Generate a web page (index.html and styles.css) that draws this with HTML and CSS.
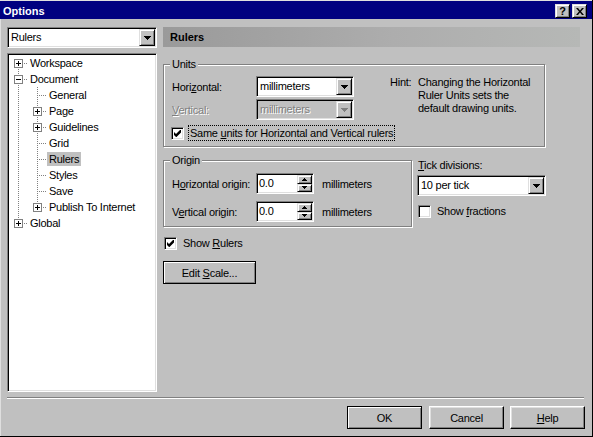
FILE: index.html
```html
<!DOCTYPE html>
<html>
<head>
<meta charset="utf-8">
<title>Options</title>
<link rel="stylesheet" href="styles.css">
</head>
<body>
<div class="window">
  <div class="titlebar">
    <span class="title">Options</span>
    <div class="tbtns">
      <span class="tbtn">?</span>
      <span class="tbtn"><svg width="8" height="7" viewBox="0 0 8 7"><path d="M0 0h2l2 2.5L6 0h2L5 3.5 8 7H6L4 4.5 2 7H0l3-3.5z"/></svg></span>
    </div>
  </div>

  <div class="main">
    <div class="left">
      <div class="combo">
        <span class="combo-text">Rulers</span>
        <span class="combo-btn"><svg width="7" height="4" viewBox="0 0 7 4"><path d="M0 0H7V1H6V2H5V3H4V4H3V3H2V2H1V1H0Z"/></svg></span>
      </div>
      <div class="tree">
        <div class="node"><span class="g first"><svg width="9" height="9"><rect x=".5" y=".5" width="8" height="8" fill="#fff" stroke="#808080"/><path d="M2 4.5h5M4.5 2v5" stroke="#000"/></svg></span><span class="lbl">Workspace</span></div>
        <div class="node"><span class="g tee"><svg width="9" height="9"><rect x=".5" y=".5" width="8" height="8" fill="#fff" stroke="#808080"/><path d="M2 4.5h5" stroke="#000"/></svg></span><span class="lbl">Document</span></div>
        <div class="node"><span class="g pass"></span><span class="g tee"></span><span class="lbl">General</span></div>
        <div class="node"><span class="g pass"></span><span class="g tee"><svg width="9" height="9"><rect x=".5" y=".5" width="8" height="8" fill="#fff" stroke="#808080"/><path d="M2 4.5h5M4.5 2v5" stroke="#000"/></svg></span><span class="lbl">Page</span></div>
        <div class="node"><span class="g pass"></span><span class="g tee"><svg width="9" height="9"><rect x=".5" y=".5" width="8" height="8" fill="#fff" stroke="#808080"/><path d="M2 4.5h5M4.5 2v5" stroke="#000"/></svg></span><span class="lbl">Guidelines</span></div>
        <div class="node"><span class="g pass"></span><span class="g tee"></span><span class="lbl">Grid</span></div>
        <div class="node"><span class="g pass"></span><span class="g tee"></span><span class="lbl sel">Rulers</span></div>
        <div class="node"><span class="g pass"></span><span class="g tee"></span><span class="lbl">Styles</span></div>
        <div class="node"><span class="g pass"></span><span class="g tee"></span><span class="lbl">Save</span></div>
        <div class="node"><span class="g pass"></span><span class="g last"><svg width="9" height="9"><rect x=".5" y=".5" width="8" height="8" fill="#fff" stroke="#808080"/><path d="M2 4.5h5M4.5 2v5" stroke="#000"/></svg></span><span class="lbl">Publish To Internet</span></div>
        <div class="node"><span class="g last"><svg width="9" height="9"><rect x=".5" y=".5" width="8" height="8" fill="#fff" stroke="#808080"/><path d="M2 4.5h5M4.5 2v5" stroke="#000"/></svg></span><span class="lbl">Global</span></div>
      </div>
    </div>

    <div class="right">
      <div class="header">Rulers</div>

      <fieldset class="group units">
        <legend>Units</legend>
        <div class="units-top">
          <div class="units-fields">
            <div class="frow">
              <span class="flabel">Hori<u>z</u>ontal:</span>
              <div class="combo w98">
                <span class="combo-text">millimeters</span>
                <span class="combo-btn"><svg width="7" height="4" viewBox="0 0 7 4"><path d="M0 0H7V1H6V2H5V3H4V4H3V3H2V2H1V1H0Z"/></svg></span>
              </div>
            </div>
            <div class="frow">
              <span class="flabel dis"><u>V</u>ertical:</span>
              <div class="combo w98 disabled">
                <span class="combo-text">millimeters</span>
                <span class="combo-btn"><svg width="7" height="4" viewBox="0 0 7 4"><path d="M0 0H7V1H6V2H5V3H4V4H3V3H2V2H1V1H0Z"/></svg></span>
              </div>
            </div>
          </div>
          <div class="hint">
            <span class="hint-key">Hint:</span>
            <span class="hint-text">Changing the Horizontal<br>Ruler Units sets the<br>default drawing units.</span>
          </div>
        </div>
        <div class="check units-check">
          <span class="cbox"><svg width="7" height="7" viewBox="0 0 7 7"><path d="M0 2L2 4L6 0H7V2.5L2.5 7H2L0 5Z"/></svg></span>
          <span class="ctext focus">Same <u>u</u>nits for Horizontal and Vertical rulers</span>
        </div>
      </fieldset>

      <div class="row2">
        <fieldset class="group origin">
          <legend>Origin</legend>
          <div class="orows">
            <div class="orow">
              <span class="flabel">H<u>o</u>rizontal origin:</span>
              <div class="spin">
                <span class="spin-text">0.0</span>
                <span class="spin-btns">
                  <span class="sb"><svg width="5" height="3" viewBox="0 0 5 3"><path d="M2 0H3V1H4V2H5V3H0V2H1V1H2Z"/></svg></span>
                  <span class="sb"><svg width="5" height="3" viewBox="0 0 5 3"><path d="M0 0H5V1H4V2H3V3H2V2H1V1H0Z"/></svg></span>
                </span>
              </div>
              <span class="unit">millimeters</span>
            </div>
            <div class="orow">
              <span class="flabel">V<u>e</u>rtical origin:</span>
              <div class="spin">
                <span class="spin-text">0.0</span>
                <span class="spin-btns">
                  <span class="sb"><svg width="5" height="3" viewBox="0 0 5 3"><path d="M2 0H3V1H4V2H5V3H0V2H1V1H2Z"/></svg></span>
                  <span class="sb"><svg width="5" height="3" viewBox="0 0 5 3"><path d="M0 0H5V1H4V2H3V3H2V2H1V1H0Z"/></svg></span>
                </span>
              </div>
              <span class="unit">millimeters</span>
            </div>
          </div>
        </fieldset>

        <div class="tick">
          <span class="tick-label"><u>T</u>ick divisions:</span>
          <div class="combo w129">
            <span class="combo-text">10 per tick</span>
            <span class="combo-btn"><svg width="7" height="4" viewBox="0 0 7 4"><path d="M0 0H7V1H6V2H5V3H4V4H3V3H2V2H1V1H0Z"/></svg></span>
          </div>
          <div class="check frac-check">
            <span class="cbox"></span>
            <span class="ctext">Show <u>f</u>ractions</span>
          </div>
        </div>
      </div>

      <div class="check rulers-check">
        <span class="cbox"><svg width="7" height="7" viewBox="0 0 7 7"><path d="M0 2L2 4L6 0H7V2.5L2.5 7H2L0 5Z"/></svg></span>
        <span class="ctext">Show <u>R</u>ulers</span>
      </div>

      <button class="btn default edit-scale">Edit <u>S</u>cale...</button>
    </div>
  </div>

  <div class="sep"></div>

  <div class="buttons">
    <button class="btn default ok">OK</button>
    <button class="btn">Cancel</button>
    <button class="btn"><u>H</u>elp</button>
  </div>
</div>
</body>
</html>
```

FILE: styles.css
```css
html, body {
  margin: 0;
  padding: 0;
  background: #c0c0c0;
}

body {
  font-family: "Liberation Sans", Arial, sans-serif;
  font-size: 11px;
  letter-spacing: -0.25px;
  color: #000;
}

u {
  text-decoration: underline;
  text-underline-offset: 1px;
}

.window {
  width: 593px;
  height: 437px;
  box-sizing: border-box;
  padding: 1px 1px 1px 0;
  background: #c0c0c0;
  box-shadow: inset -1px -1px 0 #000, inset 1px 1px 0 #dfdfdf;
  display: flex;
  flex-direction: column;
}

/* title bar */
.titlebar {
  height: 18px;
  flex: none;
  background: #000080;
  color: #fff;
  display: flex;
  justify-content: space-between;
  align-items: flex-start;
}

.title {
  font-weight: bold;
  letter-spacing: 0;
  line-height: 18px;
  padding: 1px 0 0 3px;
}

.tbtns {
  display: flex;
  gap: 2px;
  margin: 3px 5px 0 0;
}

.tbtn {
  width: 15px;
  height: 14px;
  box-sizing: border-box;
  background: #c0c0c0;
  border: 1px solid;
  border-color: #dfdfdf #000 #000 #dfdfdf;
  box-shadow: inset 1px 1px 0 #fff, inset -1px -1px 0 #808080;
  color: #000;
  font-weight: bold;
  font-size: 11px;
  letter-spacing: 0;
  line-height: 12px;
  display: flex;
  align-items: center;
  justify-content: center;
}

/* main area */
.main {
  display: flex;
  gap: 6px;
  padding: 8px 0 0 7px;
}

.left {
  width: 150px;
  flex: none;
  display: flex;
  flex-direction: column;
}

.right {
  width: 417px;
  flex: none;
  display: flex;
  flex-direction: column;
  align-items: flex-start;
}

/* combo box */
.combo {
  display: flex;
  height: 21px;
  box-sizing: border-box;
  background: #fff;
  border: 1px solid;
  border-color: #808080 #fff #fff #808080;
  box-shadow: inset 1px 1px 0 #000, inset -1px -1px 0 #dfdfdf;
  padding: 1px;
}

.combo-text {
  flex: 1;
  padding-left: 2px;
  line-height: 17px;
  white-space: nowrap;
  overflow: hidden;
}

.combo-btn {
  width: 16px;
  flex: none;
  box-sizing: border-box;
  background: #c0c0c0;
  border: 1px solid;
  border-color: #dfdfdf #000 #000 #dfdfdf;
  box-shadow: inset 1px 1px 0 #fff, inset -1px -1px 0 #808080;
  display: flex;
  align-items: center;
  justify-content: center;
}

.combo-btn svg {
  fill: #000;
}

.combo.disabled {
  background: #c0c0c0;
  color: #808080;
  text-shadow: 1px 1px 0 #fff;
}

.combo.disabled .combo-btn svg {
  fill: #808080;
}

.w98 { width: 98px; }
.w129 { width: 129px; }

/* tree */
.tree {
  margin-top: 5px;
  height: 339px;
  box-sizing: border-box;
  background: #fff;
  border: 1px solid;
  border-color: #808080 #fff #fff #808080;
  box-shadow: inset 1px 1px 0 #000, inset -1px -1px 0 #dfdfdf;
  padding: 1px;
}

.node {
  display: flex;
  align-items: center;
  height: 16px;
}

.g {
  width: 19px;
  flex: none;
  align-self: stretch;
  background-repeat: no-repeat;
}

.g svg {
  display: block;
  margin: 4px 0 0 5px;
}

.g.pass {
  background-image: repeating-linear-gradient(to bottom, #808080 0 1px, transparent 1px 2px);
  background-size: 1px 16px;
  background-position: 9px 0;
}

.g.tee {
  background-image:
    repeating-linear-gradient(to right, #808080 0 1px, transparent 1px 2px),
    repeating-linear-gradient(to bottom, #808080 0 1px, transparent 1px 2px);
  background-size: 9px 1px, 1px 16px;
  background-position: 11px 8px, 9px 0;
}

.g.first {
  background-image:
    repeating-linear-gradient(to right, #808080 0 1px, transparent 1px 2px),
    repeating-linear-gradient(to bottom, #808080 0 1px, transparent 1px 2px);
  background-size: 9px 1px, 1px 8px;
  background-position: 11px 8px, 9px 8px;
}

.g.last {
  background-image:
    repeating-linear-gradient(to right, #808080 0 1px, transparent 1px 2px),
    repeating-linear-gradient(to bottom, #808080 0 1px, transparent 1px 2px);
  background-size: 9px 1px, 1px 9px;
  background-position: 11px 8px, 9px 0;
}

.lbl {
  padding: 0 2px;
  line-height: 14px;
  white-space: nowrap;
}

.lbl.sel {
  background: #c0c0c0;
}

/* header */
.header {
  align-self: stretch;
  height: 20px;
  line-height: 20px;
  padding-left: 7px;
  font-weight: bold;
  letter-spacing: 0;
  background: linear-gradient(to right, #9a9a9a 0%, #a2a2a2 25%, #adadad 55%, #b6b8b6 100%);
}

/* group boxes */
.group {
  margin: 0;
  min-width: 0;
  box-sizing: border-box;
  border: 1px solid #808080;
  box-shadow: 1px 1px 0 #fff, inset 1px 1px 0 #fff;
}

.group legend {
  padding: 0 2px;
  margin-left: -2px;
  line-height: 13px;
  background: #c0c0c0;
}

.units {
  margin-top: 11px;
  width: 382px;
  padding: 5px 8px 5px 8px;
}

.units-top {
  display: flex;
  gap: 36px;
  align-items: flex-start;
}

.units-fields {
  display: flex;
  flex-direction: column;
  gap: 2px;
}

.frow, .orow {
  display: flex;
  align-items: center;
  height: 21px;
}

.flabel {
  width: 84px;
  flex: none;
  white-space: nowrap;
}

.flabel.dis {
  color: #808080;
  text-shadow: 1px 1px 0 #fff;
}

.hint {
  display: flex;
  line-height: 13px;
}

.hint-key {
  width: 28px;
  flex: none;
}

/* checkboxes */
.check {
  display: flex;
  align-items: center;
  height: 16px;
}

.cbox {
  width: 13px;
  height: 13px;
  flex: none;
  box-sizing: border-box;
  background: #fff;
  border: 1px solid;
  border-color: #808080 #fff #fff #808080;
  box-shadow: inset 1px 1px 0 #000, inset -1px -1px 0 #dfdfdf;
  display: flex;
  align-items: center;
  justify-content: center;
  margin-right: 4px;
}

.ctext {
  line-height: 14px;
  white-space: nowrap;
  padding: 0 1px;
  border: 1px solid transparent;
}

.ctext.focus {
  border: 1px dotted #000;
}

.units-check {
  margin-top: 5px;
  margin-left: -1px;
}

/* origin */
.row2 {
  display: flex;
  gap: 6px;
  margin-top: 7px;
  align-items: flex-start;
}

.origin {
  width: 249px;
  padding: 6px 8px 4px 8px;
}

.orows {
  display: flex;
  flex-direction: column;
  gap: 7px;
}

.spin {
  width: 58px;
  height: 21px;
  flex: none;
  box-sizing: border-box;
  background: #fff;
  border: 1px solid;
  border-color: #808080 #fff #fff #808080;
  box-shadow: inset 1px 1px 0 #000, inset -1px -1px 0 #dfdfdf;
  padding: 1px;
  display: flex;
}

.spin-text {
  flex: 1;
  padding-left: 1px;
  line-height: 16px;
}

.spin-btns {
  width: 15px;
  flex: none;
  display: flex;
  flex-direction: column;
}

.sb {
  flex: 1;
  box-sizing: border-box;
  background: #c0c0c0;
  border: 1px solid;
  border-color: #dfdfdf #000 #000 #dfdfdf;
  box-shadow: inset 1px 1px 0 #fff, inset -1px -1px 0 #808080;
  display: flex;
  align-items: center;
  justify-content: center;
}

.sb svg {
  fill: #000;
}

.unit {
  margin-left: 8px;
  white-space: nowrap;
}

/* tick divisions */
.tick {
  display: flex;
  flex-direction: column;
  align-items: flex-start;
}

.tick-label {
  margin-top: 5px;
  line-height: 13px;
}

.tick .combo {
  margin-top: 3px;
  margin-left: -1px;
}

.frac-check {
  margin-top: 7px;
}

.rulers-check {
  margin-top: 8px;
  margin-left: 1px;
}

/* buttons */
.btn {
  height: 23px;
  width: 75px;
  box-sizing: border-box;
  margin: 0;
  padding: 0;
  font: inherit;
  letter-spacing: inherit;
  color: #000;
  background: #c0c0c0;
  border: 1px solid;
  border-color: #fff #000 #000 #fff;
  box-shadow: inset -1px -1px 0 #808080, inset 1px 1px 0 #dfdfdf;
  text-align: center;
}

.btn.default {
  border: 1px solid #000;
  box-shadow: inset 1px 1px 0 #fff, inset -1px -1px 0 #808080;
}

.edit-scale {
  width: 93px;
  margin-top: 10px;
}

.sep {
  margin: 5px 8px 0 7px;
  height: 0;
  border-top: 1px solid #808080;
  border-bottom: 1px solid #fff;
}

.buttons {
  display: flex;
  justify-content: flex-end;
  gap: 6px;
  margin-top: 7px;
  padding-right: 7px;
}

.btn.ok {
  margin-right: 1px;
}
```
